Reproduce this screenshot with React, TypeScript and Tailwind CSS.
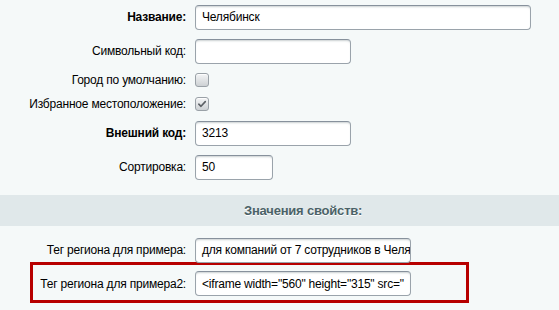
import React from "react";

const inputCls =
  "h-[25px] bg-white rounded-[4px] border border-[#9aa3ab] border-t-[#87919c] shadow-[inset_0_2px_2px_-1px_rgba(180,188,191,0.7)] px-[6px] text-[12px] tracking-[-0.2px] text-black flex items-center overflow-hidden whitespace-nowrap";

function Input({ w, value }: { w: number; value?: string }) {
  return (
    <div className={inputCls} style={{ width: w }}>
      {value}
    </div>
  );
}

function Checkbox({ checked }: { checked?: boolean }) {
  return (
    <div className="w-[14px] h-[14px] rounded-[3px] border border-[#9aa1a7] bg-gradient-to-b from-[#f4f5f6] to-[#cdd1d4] shadow-[inset_0_1px_0_rgba(255,255,255,0.8)] flex items-center justify-center">
      {checked && (
        <svg width="10" height="10" viewBox="0 0 10 10">
          <path d="M1.8 5.2 L4 7.3 L8.3 2.6" fill="none" stroke="#5b6065" strokeWidth="1.6" strokeLinecap="round" strokeLinejoin="round" />
        </svg>
      )}
    </div>
  );
}

function Row({
  label,
  bold,
  h,
  children,
}: {
  label: string;
  bold?: boolean;
  h: number;
  children: React.ReactNode;
}) {
  return (
    <div className="flex items-center" style={{ height: h }}>
      <div
        className={`w-[195px] shrink-0 pr-[9px] text-right text-[12px] tracking-[-0.2px] text-black whitespace-nowrap ${bold ? "font-bold" : ""}`}
      >
        {label}
      </div>
      {children}
    </div>
  );
}

export default function App() {
  return (
    <div
      className="w-[559px] h-[310px] bg-[#f5f9f9] overflow-hidden"
      style={{ fontFamily: '"Liberation Sans", Arial, sans-serif' }}
    >
      <Row label="Название:" bold h={34}>
        <Input w={336} value="Челябинск" />
      </Row>
      <Row label="Символьный код:" h={34}>
        <Input w={156} />
      </Row>
      <Row label="Город по умолчанию:" h={23}>
        <Checkbox />
      </Row>
      <Row label="Избранное местоположение:" h={25}>
        <Checkbox checked />
      </Row>
      <Row label="Внешний код:" bold h={34}>
        <Input w={156} value="3213" />
      </Row>
      <Row label="Сортировка:" h={34}>
        <Input w={78} value="50" />
      </Row>
      <div className="h-[11px]" />
      <div className="h-[31px] bg-[#e0e8ea] flex items-center pl-[244px] text-[13px] tracking-[-0.2px] font-bold text-[#4b6267] [text-shadow:0_1px_#fff]">
        Значения свойств:
      </div>
      <div className="h-[12px]" />
      <Row label="Тег региона для примера:" h={24}>
        <Input w={216} value="для компаний от 7 сотрудников в Челябинске" />
      </Row>
      <div className="ml-[30px] w-[439px] h-[41px] border-[3px] border-[#b70000] pt-[5px]">
        <div className="flex items-center h-[27px]">
          <div className="w-[162px] shrink-0 pr-[9px] text-right text-[12px] tracking-[-0.2px] text-black whitespace-nowrap">
            Тег региона для примера2:
          </div>
          <Input w={216} value={'<iframe width="560" height="315" src="'} />
        </div>
      </div>
    </div>
  );
}
